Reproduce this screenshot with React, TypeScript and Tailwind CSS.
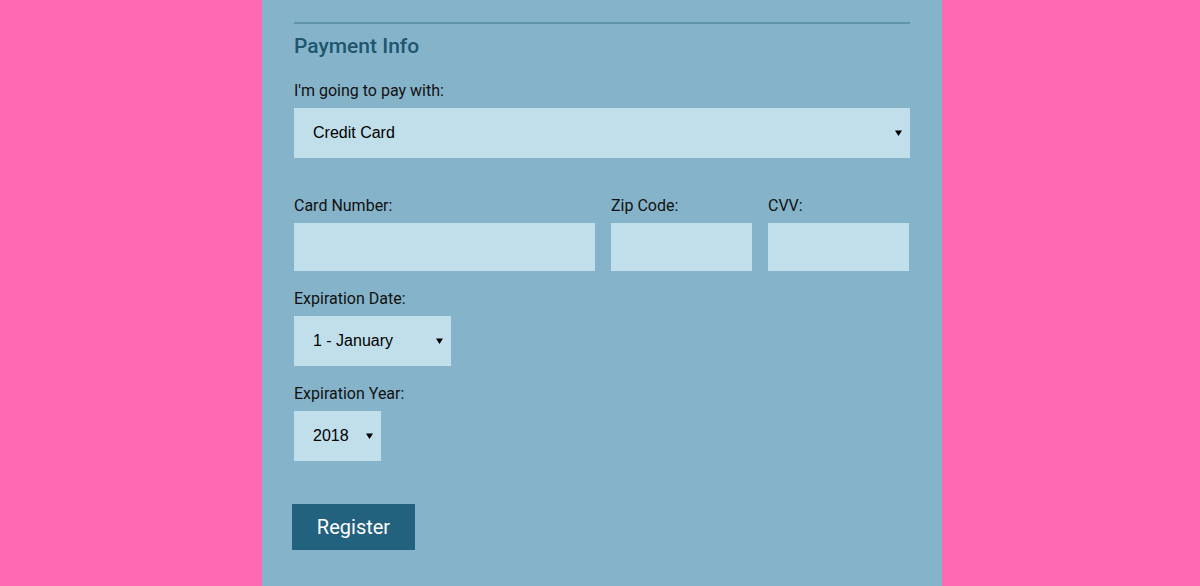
import React from "react";

function Arrow() {
  return (
    <svg width="7" height="6" viewBox="0 0 7 6" className="shrink-0">
      <path d="M0 0.5 L7 0.5 L3.5 6 Z" fill="#000" />
    </svg>
  );
}

function FakeSelect({ value, className }: { value: string; className: string }) {
  return (
    <div
      className={`flex items-center justify-between bg-[#c1dfea] pl-[19px] pr-[8px] text-[16px] text-black font-['Liberation_Sans',Arial,sans-serif] ${className}`}
    >
      <span>{value}</span>
      <Arrow />
    </div>
  );
}

function Label({ children }: { children: React.ReactNode }) {
  return <label className="block text-[16px] leading-[19px] mb-2 text-[#111]">{children}</label>;
}

export default function App() {
  return (
    <div className="min-h-[586px] bg-[#ff69b4] font-['Roboto','Noto_Sans',sans-serif]">
      <div className="ml-[262px] w-[680px] min-h-[586px] bg-[#85b4ca] px-8 pt-[22px]">
        <div className="h-[2px] bg-[#5f94ab]" />
        <h2 className="mt-[10px] text-[21px] leading-[24px] font-medium text-[#1f566f]">Payment Info</h2>

        <div className="mt-[23px]">
          <Label>I'm going to pay with:</Label>
          <FakeSelect value="Credit Card" className="h-[50px] w-full" />
        </div>

        <div className="mt-[38px] flex gap-4">
          <div className="w-[301px]">
            <Label>Card Number:</Label>
            <div className="h-[48px] bg-[#c1dfea]" />
          </div>
          <div className="w-[141px]">
            <Label>Zip Code:</Label>
            <div className="h-[48px] bg-[#c1dfea]" />
          </div>
          <div className="w-[141px]">
            <Label>CVV:</Label>
            <div className="h-[48px] bg-[#c1dfea]" />
          </div>
        </div>

        <div className="mt-[18px]">
          <Label>Expiration Date:</Label>
          <FakeSelect value="1 - January" className="h-[50px] w-[157px]" />
        </div>

        <div className="mt-[18px]">
          <Label>Expiration Year:</Label>
          <FakeSelect value="2018" className="h-[50px] w-[87px]" />
        </div>

        <button className="mt-[43px] -ml-[2px] h-[46px] w-[123px] bg-[#22627e] text-white text-[20px]">
          Register
        </button>
      </div>
    </div>
  );
}
